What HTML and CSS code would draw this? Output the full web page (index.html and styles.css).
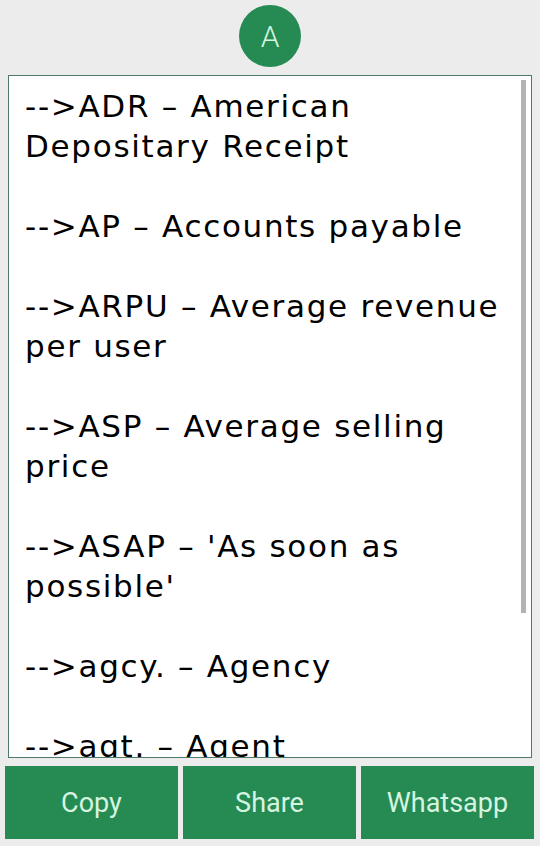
FILE: index.html
```html
<!DOCTYPE html>
<html lang="en">

<head>
    <meta charset="UTF-8">
    <meta name="viewport" content="width=device-width, initial-scale=1.0">
    <title>Abbreviations</title>
    <link rel="stylesheet" href="styles.css">
</head>

<body>
    <div class="header">
        <div class="letter">A</div>
    </div>
    <div class="textBox">
        <div class="textScroll">
            <p class="entries">--&gt;ADR &ndash; American Depositary Receipt<br><br>--&gt;AP &ndash; Accounts payable<br><br>--&gt;ARPU &ndash; Average revenue per user<br><br>--&gt;ASP &ndash; Average selling price<br><br>--&gt;ASAP &ndash; 'As soon as possible'<br><br>--&gt;agcy. &ndash; Agency<br><br>--&gt;agt. &ndash; Agent</p>
        </div>
        <div class="scrollThumb"></div>
    </div>
    <div class="actions">
        <button class="actionBtn">Copy</button>
        <button class="actionBtn">Share</button>
        <button class="actionBtn">Whatsapp</button>
    </div>
</body>

</html>
```

FILE: styles.css
```css
html, body {
    margin: 0;
    padding: 0;
    background: #ececec;
    height: 846px;
    overflow: hidden;
}

.header {
    display: flex;
    justify-content: center;
    padding-top: 5px;
    height: 70px;
}

.letter {
    width: 62px;
    height: 62px;
    border-radius: 50%;
    background: #268a53;
    color: #d6f5e0;
    font-family: Roboto, sans-serif;
    font-weight: 300;
    font-size: 30px;
    display: flex;
    align-items: center;
    justify-content: center;
}

.textBox {
    position: relative;
    margin: 0 8px;
    height: 681px;
    border: 1px solid #4d7a66;
    background: #fff;
    overflow: hidden;
}

.textScroll {
    padding: 10px 18px 0 16px;
}

.entries {
    margin: 0;
    font-family: "DejaVu Sans", sans-serif;
    font-size: 31px;
    letter-spacing: 1.7px;
    line-height: 40px;
    color: #000;
}

.scrollThumb {
    position: absolute;
    top: 4px;
    right: 5px;
    width: 5px;
    height: 533px;
    background: #b3b3b3;
}

.actions {
    display: flex;
    gap: 5px;
    padding: 8px 6px 0 5px;
}

.actionBtn {
    flex: 1;
    height: 73px;
    border: none;
    background: #268a53;
    color: #d6f5e0;
    font-family: Roboto, sans-serif;
    font-size: 27px;
    padding: 0;
}
```
